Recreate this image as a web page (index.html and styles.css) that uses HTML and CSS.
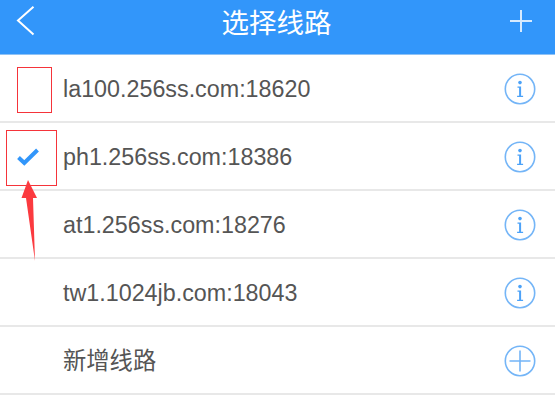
FILE: index.html
```html
<!DOCTYPE html>
<html lang="zh">
<head>
<meta charset="utf-8">
<title>选择线路</title>
<link rel="stylesheet" href="styles.css">
</head>
<body>
<div class="page">
  <header class="bar">
    <svg class="bar-back" width="20" height="30" viewBox="0 0 20 30"><path d="M18.500 .8 3 14.500l15.500 14" fill="none" stroke="#fff" stroke-width="2"/></svg>
    <h1 class="bar-title">选择线路</h1>
    <svg class="bar-add" width="24" height="24" viewBox="0 0 24 24"><path d="M12 1v22M1 12h22" stroke="#fff" stroke-opacity=".8" stroke-width="2" fill="none"/></svg>
  </header>
  <ul class="list">
    <li class="row">
      <span class="check"></span>
      <span class="label">la100.256ss.com:18620</span>
      <svg class="info" width="32" height="32" viewBox="0 0 32 32"><circle cx="16" cy="16" r="14.7" fill="none" stroke="#74b5f7" stroke-width="1.6"/><circle cx="16" cy="9.6" r="1.8" fill="#4ca2f8"/><path d="M13.5 13.5h3.6v9.2h2v1.3h-6v-1.3h2v-7.9h-1.6z" fill="#4ca2f8"/></svg>
    </li>
    <li class="row">
      <span class="check"><svg class="check-icon" width="22" height="18" viewBox="0 0 22 18"><path d="M1.500 9.500l5.800 5.500L20.500 2" fill="none" stroke="#3296fa" stroke-width="4"/></svg></span>
      <span class="label">ph1.256ss.com:18386</span>
      <svg class="info" width="32" height="32" viewBox="0 0 32 32"><circle cx="16" cy="16" r="14.7" fill="none" stroke="#74b5f7" stroke-width="1.6"/><circle cx="16" cy="9.6" r="1.8" fill="#4ca2f8"/><path d="M13.5 13.5h3.6v9.2h2v1.3h-6v-1.3h2v-7.9h-1.6z" fill="#4ca2f8"/></svg>
    </li>
    <li class="row">
      <span class="check"></span>
      <span class="label">at1.256ss.com:18276</span>
      <svg class="info" width="32" height="32" viewBox="0 0 32 32"><circle cx="16" cy="16" r="14.7" fill="none" stroke="#74b5f7" stroke-width="1.6"/><circle cx="16" cy="9.6" r="1.8" fill="#4ca2f8"/><path d="M13.5 13.5h3.6v9.2h2v1.3h-6v-1.3h2v-7.9h-1.6z" fill="#4ca2f8"/></svg>
    </li>
    <li class="row">
      <span class="check"></span>
      <span class="label">tw1.1024jb.com:18043</span>
      <svg class="info" width="32" height="32" viewBox="0 0 32 32"><circle cx="16" cy="16" r="14.7" fill="none" stroke="#74b5f7" stroke-width="1.6"/><circle cx="16" cy="9.6" r="1.8" fill="#4ca2f8"/><path d="M13.5 13.5h3.6v9.2h2v1.3h-6v-1.3h2v-7.9h-1.6z" fill="#4ca2f8"/></svg>
    </li>
    <li class="row">
      <span class="check"></span>
      <span class="label">新增线路</span>
      <svg class="info" width="32" height="32" viewBox="0 0 32 32"><circle cx="16" cy="16" r="14.7" fill="none" stroke="#74b5f7" stroke-width="1.6"/><path d="M16 5.500v21M5.500 16h21" fill="none" stroke="#74b5f7" stroke-width="1.6"/></svg>
    </li>
  </ul>
  <div class="mark mark-small"></div>
  <div class="mark mark-large"></div>
  <svg class="mark-arrow" width="20" height="84" viewBox="0 0 20 84"><path d="M8 0 17 18H13L15 81 6 18H1.500z" fill="#fb3a3f"/></svg>
</div>
</body>
</html>
```

FILE: styles.css
```css
* { box-sizing: border-box; }
html, body { margin: 0; padding: 0; }
body { background: #fff; font-family: "Liberation Sans", "Noto Sans CJK SC", sans-serif; overflow: hidden; }
.page { position: relative; width: 555px; height: 407px; }
.bar {
  display: grid;
  grid-template-columns: 1fr auto 1fr;
  align-items: center;
  height: 55px;
  padding: 0 22px 12px 15px;
  background: #3296fa;
  border-bottom: 1px solid #8fc2f5;
}
.bar-add { justify-self: end; }
.bar-title {
  margin: 0 0 0 5px;
  color: #fff;
  font-size: 27.500px;
  font-weight: 400;
  font-family: "Noto Sans CJK SC", sans-serif;
  line-height: 34px;
}
.list { margin: 0; padding: 0; list-style: none; }
.row {
  display: flex;
  align-items: center;
  height: 68px;
  padding: 2px 19px 0 15px;
  border-bottom: 2px solid #e8e8e8;
}
.check { display: flex; align-items: center; width: 48px; height: 24px; }
.check-icon { margin-left: 2px; }
.label { flex: 1; color: #555; font-size: 23.3px; line-height: 30px; }
.mark { position: absolute; border: 1px solid #f5343a; }
.mark-small { left: 17px; top: 67px; width: 35px; height: 46px; }
.mark-large { left: 6px; top: 130px; width: 51px; height: 56px; }
.mark-arrow { position: absolute; left: 20px; top: 180px; }
```
